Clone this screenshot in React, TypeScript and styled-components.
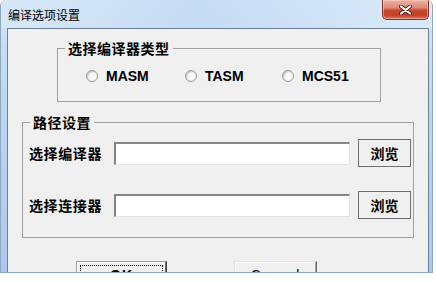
import * as React from 'react'
import styled, { createGlobalStyle } from 'styled-components'

const GlobalStyle = createGlobalStyle`
  html, body {
    margin: 0;
    padding: 0;
    background: #ffffff;
  }
  body {
    font-family: "Liberation Sans", "Noto Sans CJK SC", sans-serif;
  }
`

const cjk = `"Noto Sans CJK SC", "Liberation Sans", sans-serif`

const Window = styled.div`
  box-sizing: border-box;
  width: 433px;
  height: 273px;
  overflow: hidden;
  display: flex;
  flex-direction: column;
  border: 1px solid #8ea7c2;
  border-top: 0;
  border-radius: 6px 6px 0 0;
  background: linear-gradient(180deg, #dae9f8 0%, #c6ddf4 18%, #b9d4f1 50%, #a9caed 100%);
`
const TitleBar = styled.div`
  height: 28px;
  flex: 0 0 auto;
  display: flex;
  align-items: flex-start;
  padding-left: 7px;
  background: linear-gradient(90deg, rgba(216,232,247,0.9) 0%, rgba(190,216,243,0.7) 45%, rgba(206,226,247,0.8) 75%, rgba(220,235,249,0.9) 100%);
`
const TitleText = styled.div`
  font-family: ${cjk};
  font-size: 12px;
  line-height: 16px;
  margin-top: 7px;
  color: #000;
`
const CloseButton = styled.div`
  margin-left: auto;
  margin-right: 3px;
  width: 47px;
  height: 20px;
  box-sizing: border-box;
  border: 1px solid #7d3326;
  border-top: 0;
  border-radius: 0 0 5px 5px;
  background: linear-gradient(180deg, #eab4a6 0%, #dd8b78 40%, #c8472f 55%, #c43f28 80%, #dd7a5e 100%);
  display: flex;
  align-items: center;
  justify-content: center;
  box-shadow: inset 0 0 0 1px rgba(255, 210, 200, 0.5);
`
const Client = styled.div`
  flex: 1 1 auto;
  margin: 0 3px 0 6px;
  background: #f0f0f0;
  border: 1px solid #6f8095;
  border-bottom: 0;
  display: flex;
  flex-direction: column;
  align-items: flex-start;
`
const GroupBox = styled.fieldset<{ left: number; width: number; top: number }>`
  box-sizing: border-box;
  margin: ${p => p.top}px 0 0 ${p => p.left}px;
  width: ${p => p.width}px;
  padding: 0;
  border: 1px solid #a0a0a0;
  min-width: 0;
`
const Legend = styled.legend`
  margin-left: 7px;
  padding: 0 3px;
  font-family: ${cjk};
  font-weight: bold;
  font-size: 14px;
  line-height: 16px;
  letter-spacing: 0.5px;
  color: #000;
`
const RadioRow = styled.div`
  display: grid;
  grid-template-columns: 99px 97px auto;
  padding: 12px 0 17px 28px;
`
const RadioItem = styled.label`
  display: flex;
  align-items: center;
  gap: 8px;
  height: 16px;
  font-size: 14px;
  font-weight: bold;
  color: #000;
`
const RadioCircle = styled.span`
  box-sizing: border-box;
  width: 12px;
  height: 12px;
  border-radius: 50%;
  border: 1px solid #9a9a9a;
  background: radial-gradient(circle at 60% 60%, #ffffff 0%, #f4f4f4 45%, #d6d6d6 100%);
  box-shadow: inset 1px 1px 1px rgba(0, 0, 0, 0.12);
`
const PathRows = styled.div`
  display: flex;
  flex-direction: column;
  gap: 24px;
  padding: 9px 0 18px 6px;
`
const PathRow = styled.div`
  display: grid;
  grid-template-columns: 77px 236px 53px;
  column-gap: 8px;
  align-items: center;
  height: 28px;
`
const PathLabel = styled.span`
  font-family: ${cjk};
  font-weight: bold;
  font-size: 14px;
  letter-spacing: 0.6px;
  color: #000;
  white-space: nowrap;
`
const TextBox = styled.input`
  box-sizing: border-box;
  width: 236px;
  height: 23px;
  margin: 0;
  padding: 0 3px;
  background: #fff;
  border-style: solid;
  border-width: 2px 1px 1px 2px;
  border-color: #858585 #e3e3e3 #e3e3e3 #858585;
  outline: none;
`
const BrowseButton = styled.button`
  box-sizing: border-box;
  width: 53px;
  height: 28px;
  margin: 0;
  padding: 0;
  background: #f0f0f0;
  border: 1px solid #707070;
  font-family: ${cjk};
  font-weight: bold;
  font-size: 14px;
  color: #000;
`
const ButtonBar = styled.div`
  display: flex;
  gap: 67px;
  margin-top: 23px;
  padding-left: 68px;
`
const DialogButton = styled.button<{ w: number; isDefault?: boolean }>`
  box-sizing: border-box;
  width: ${p => p.w}px;
  height: 24px;
  margin: 0;
  padding: 3px 0 0;
  background: #f0f0f0;
  font-family: "Liberation Sans", sans-serif;
  font-size: 14px;
  font-weight: ${p => (p.isDefault ? 'bold' : 'normal')};
  letter-spacing: 1px;
  color: #000;
  border: 1px solid;
  border-color: ${p =>
    p.isDefault ? '#a0a0a0 #404040 #404040 #a0a0a0' : '#e3e3e3 #696969 #696969 #e3e3e3'};
  box-shadow: ${p =>
    p.isDefault
      ? 'inset -1px -1px #6a6a6a, inset 1px 1px #ffffff'
      : 'inset -1px -1px #a0a0a0, inset 1px 1px #ffffff'};
  outline: ${p => (p.isDefault ? '1px dotted #000' : 'none')};
  outline-offset: -5px;
`

const CloseGlyph = () => (
  <svg width="13" height="10" viewBox="0 0 13 10">
    <path d="M2 1.5 L11 8.5 M11 1.5 L2 8.5" stroke="#5a2018" strokeWidth="4" strokeLinecap="round" />
    <path d="M2 1.5 L11 8.5 M11 1.5 L2 8.5" stroke="#ffffff" strokeWidth="2.2" strokeLinecap="round" />
  </svg>
)

const compilers = ['MASM', 'TASM', 'MCS51']
const paths = ['选择编译器', '选择连接器']

const App = () => (
  <>
    <GlobalStyle />
    <Window>
      <TitleBar>
        <TitleText>编译选项设置</TitleText>
        <CloseButton>
          <CloseGlyph />
        </CloseButton>
      </TitleBar>
      <Client>
        <GroupBox left={49} width={324} top={11}>
          <Legend>选择编译器类型</Legend>
          <RadioRow>
            {compilers.map(c => (
              <RadioItem key={c}>
                <RadioCircle />
                {c}
              </RadioItem>
            ))}
          </RadioRow>
        </GroupBox>
        <GroupBox left={14} width={392} top={12}>
          <Legend>路径设置</Legend>
          <PathRows>
            {paths.map(p => (
              <PathRow key={p}>
                <PathLabel>{p}</PathLabel>
                <TextBox />
                <BrowseButton>浏览</BrowseButton>
              </PathRow>
            ))}
          </PathRows>
        </GroupBox>
        <ButtonBar>
          <DialogButton w={91} isDefault>OK</DialogButton>
          <DialogButton w={83}>Cancel</DialogButton>
        </ButtonBar>
      </Client>
    </Window>
  </>
)

export default App
